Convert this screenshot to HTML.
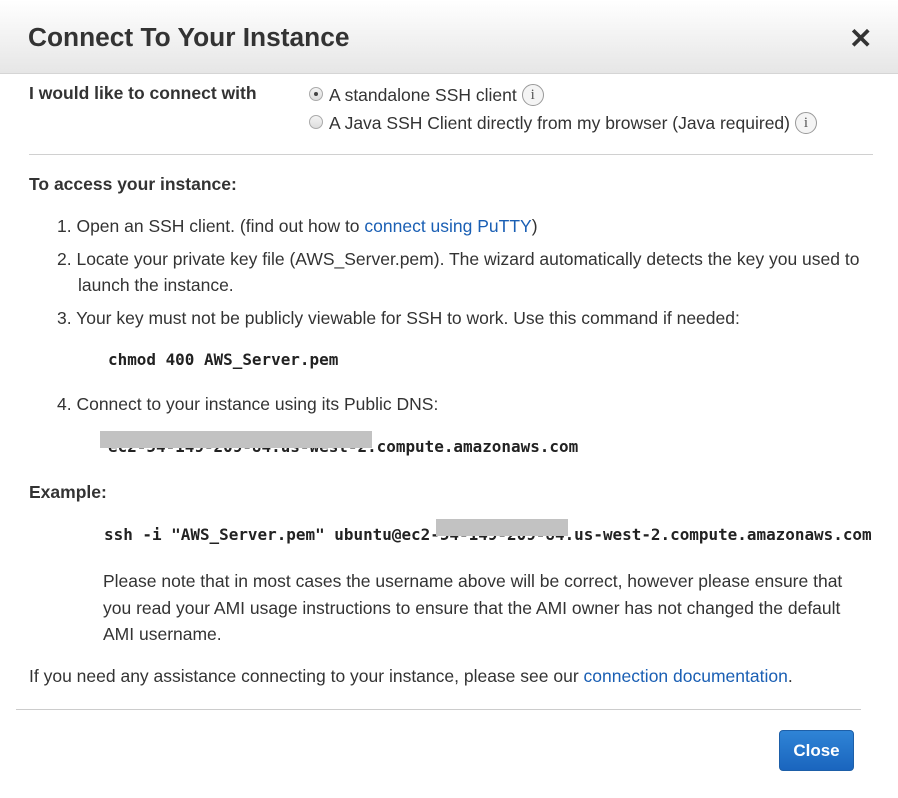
<!DOCTYPE html>
<html><head><style>
body{margin:0;width:898px;height:798px;background:#fff;font-family:"Liberation Sans",Arial,sans-serif;color:#333;font-size:17.5px;position:relative;overflow:hidden}
.a{position:absolute;white-space:nowrap}
.hdr{position:absolute;left:0;top:0;width:898px;height:73px;background:linear-gradient(#fff,#e6e6e6);border-bottom:1px solid #d5d5d5}
.m{font-family:"DejaVu Sans Mono",monospace;font-weight:bold;font-size:15.95px;color:#222}
a{color:#1a5fb4;text-decoration:none}
.info{display:inline-block;width:20px;height:20px;border:1px solid #999;border-radius:50%;text-align:center;font-size:15px;line-height:20px;color:#555;vertical-align:2px;margin-left:5px;background:#f4f4f4;font-family:"Liberation Serif",serif}
.radio{display:inline-block;width:12px;height:12px;border:1px solid #aaa;border-radius:50%;background:linear-gradient(#f4f4f4,#ddd);vertical-align:0px;margin-right:6px;position:relative}
.radio.on:after{content:"";position:absolute;left:4px;top:4px;width:4px;height:4px;border-radius:50%;background:#444}
.gray{position:absolute;background:#c2c2c2;height:17px}
</style></head><body>
<div class="hdr"></div>
<div class="a" style="left:28px;top:22px;font-size:26.3px;font-weight:bold;color:#333">Connect To Your Instance</div>
<div class="a" style="left:849px;top:22px;font-size:28px;font-weight:bold;color:#333">✕</div>
<div class="a" style="left:29px;top:83px;font-weight:bold">I would like to connect with</div>
<div class="a" style="left:309px;top:84px"><span class="radio on"></span>A standalone SSH client<span class="info">i</span></div>
<div class="a" style="left:309px;top:112px"><span class="radio"></span>A Java SSH Client directly from my browser (Java required)<span class="info">i</span></div>
<div class="a" style="left:29px;top:154px;width:844px;height:1px;background:#d0d0d0"></div>
<div class="a" style="left:29px;top:174px;font-weight:bold">To access your instance:</div>
<div class="a" style="left:57px;top:216px">1. Open an SSH client. (find out how to <a>connect using PuTTY</a>)</div>
<div class="a" style="left:57px;top:249px">2. Locate your private key file (AWS_Server.pem). The wizard automatically detects the key you used to</div>
<div class="a" style="left:78px;top:275px">launch the instance.</div>
<div class="a" style="left:57px;top:308px">3. Your key must not be publicly viewable for SSH to work. Use this command if needed:</div>
<div class="a m" style="left:108px;top:350px">chmod 400 AWS_Server.pem</div>
<div class="a" style="left:57px;top:394px">4. Connect to your instance using its Public DNS:</div>
<div class="a m" style="left:108px;top:437px">ec2-54-149-209-84.us-west-2.compute.amazonaws.com</div>
<div class="gray" style="left:100px;top:431px;width:272px"></div>
<div class="a" style="left:29px;top:482px;font-weight:bold">Example:</div>
<div class="a m" style="left:104px;top:525px">ssh -i "AWS_Server.pem" ubuntu@ec2-54-149-209-84.us-west-2.compute.amazonaws.com</div>
<div class="gray" style="left:436px;top:519px;width:132px"></div>
<div class="a" style="left:103px;top:568px;line-height:26.5px">Please note that in most cases the username above will be correct, however please ensure that<br>you read your AMI usage instructions to ensure that the AMI owner has not changed the default<br>AMI username.</div>
<div class="a" style="left:29px;top:666px">If you need any assistance connecting to your instance, please see our <a>connection documentation</a>.</div>
<div class="a" style="left:16px;top:709px;width:845px;height:1px;background:#ccc"></div>
<div class="a" style="left:779px;top:730px;width:73px;height:39px;border:1px solid #1d5fa8;border-radius:4px;background:linear-gradient(#2f84d6,#1a65be);color:#fff;font-weight:bold;font-size:17px;text-align:center;line-height:39px">Close</div>
</body></html>
